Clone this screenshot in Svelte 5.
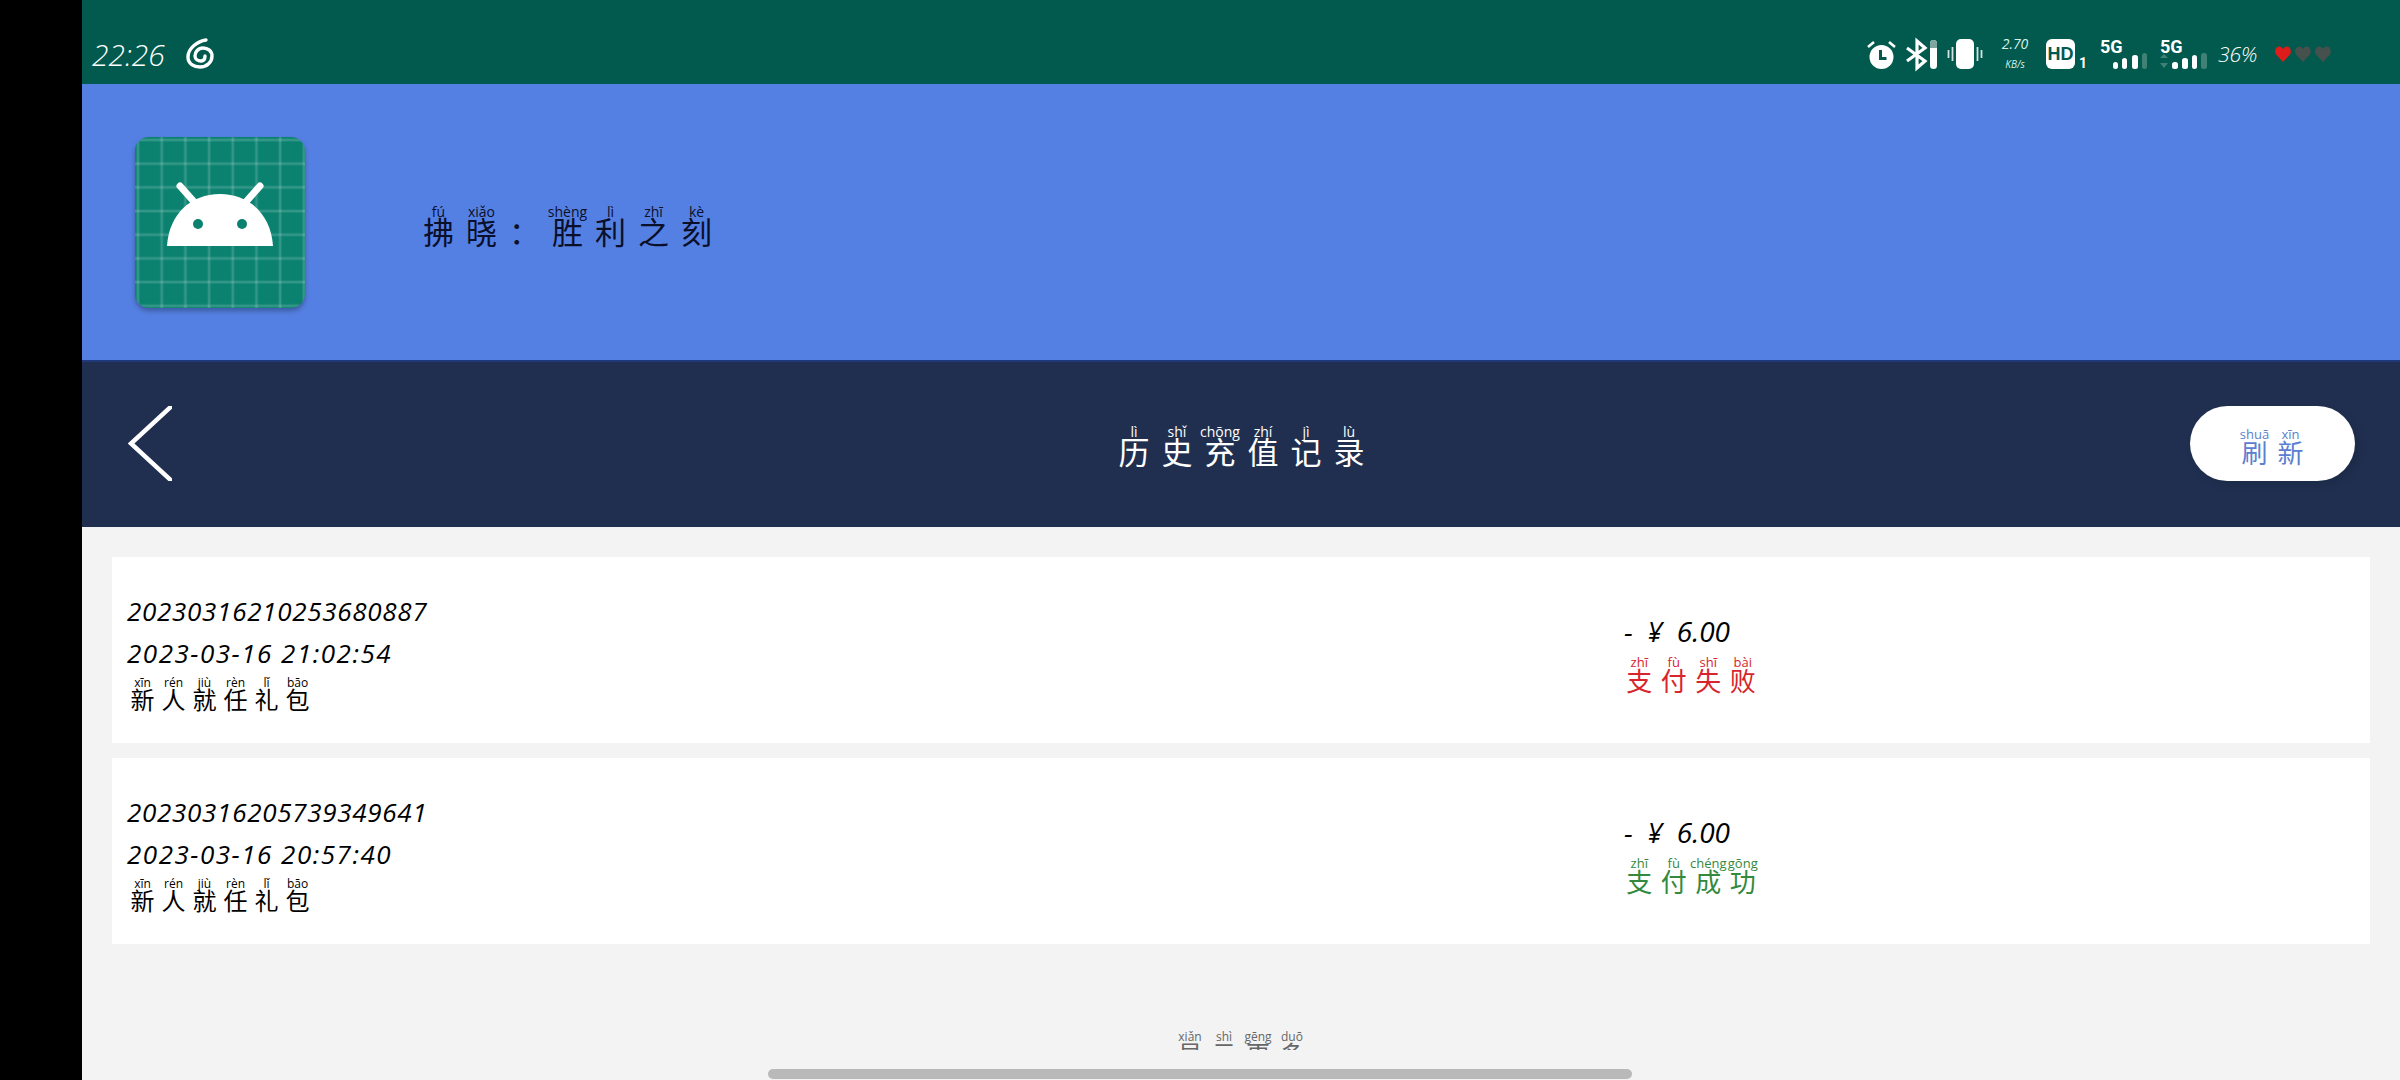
<script>
	const rows = [
		{
			id: '20230316210253680887',
			time: '2023-03-16 21:02:54',
			status: [['支', 'zhī'], ['付', 'fù'], ['失', 'shī'], ['败', 'bài']],
			tone: 'fail'
		},
		{
			id: '20230316205739349641',
			time: '2023-03-16 20:57:40',
			status: [['支', 'zhī'], ['付', 'fù'], ['成', 'chéng'], ['功', 'gōng']],
			tone: 'ok'
		}
	];

	const gift = [['新', 'xīn'], ['人', 'rén'], ['就', 'jiù'], ['任', 'rèn'], ['礼', 'lǐ'], ['包', 'bāo']];
	const appTitle = [['拂', 'fú'], ['晓', 'xiǎo'], ['：', ''], ['胜', 'shèng'], ['利', 'lì'], ['之', 'zhī'], ['刻', 'kè']];
	const pageTitle = [['历', 'lì'], ['史', 'shǐ'], ['充', 'chōng'], ['值', 'zhí'], ['记', 'jì'], ['录', 'lù']];
	const refresh = [['刷', 'shuā'], ['新', 'xīn']];
	const more = [['显', 'xiǎn'], ['示', 'shì'], ['更', 'gēng'], ['多', 'duō']];

	const heart = 'M8 16L1 8.500C-1 5.500 .5 .5 4.200 .5 5.800 .5 7.200 1.500 8 3 8.800 1.500 10.200 .5 11.800 .5 15.500 .5 17 5.500 15 8.500z';
</script>

{#snippet py(chars)}
	{#each chars as [c, p]}
		<ruby>{c}<rt>{p}</rt></ruby>
	{/each}
{/snippet}

<div class="screen">
	<div class="bezel"></div>
	<div class="main">
		<div class="status">
			<span class="clock">22:26</span>
			<svg class="swirl" width="28" height="31" viewBox="0 0 28 31">
				<path d="M20 2C12 3 2 10 2 19c0 7 6 10 12 10 7 0 12-5 12-11 0-5-4-8-9-8-5 0-8 4-8 8 0 3 3 5 6 5 3 0 4-2 4-5" fill="none" stroke="#fff" stroke-width="3.400" stroke-linecap="round" />
			</svg>
			<div class="spacer"></div>
			<div class="tray">
				<svg width="29" height="29" viewBox="0 0 29 29">
					<circle cx="14.500" cy="17" r="12" fill="#fff" />
					<path d="M13.500 10v8.500h6" fill="none" stroke="#015a4d" stroke-width="3" />
					<path d="M1 7l6-5M28 7l-6-5" stroke="#fff" stroke-width="2.600" />
				</svg>
				<svg class="bt" width="31" height="29" viewBox="0 0 31 29">
					<path d="M1 8l18 13-8 7V1l8 7L1 21" fill="none" stroke="#fff" stroke-width="3.200" />
					<rect x="24" y="0" width="7" height="29" rx="3.500" fill="#fff" />
					<path d="M24 8V3.500a3.500 3.500 0 0 1 7 0V8z" fill="#7fa59f" />
				</svg>
				<svg class="vib" width="36" height="30" viewBox="0 0 36 30">
					<rect x="9" y="0" width="18" height="30" rx="5" fill="#fff" />
					<path d="M1.500 11v8M5.500 8v14M30.500 8v14M34.500 11v8" stroke="#d3e2df" stroke-width="1.800" />
				</svg>
				<div class="speed"><span>2.70</span><span class="unit">KB/s</span></div>
				<svg class="hd" width="39" height="30" viewBox="0 0 39 30">
					<rect x="0" y="0" width="29" height="30" rx="6" fill="#fff" />
					<text x="14.500" y="21" text-anchor="middle" class="hdtext">HD</text>
					<text x="33" y="29" class="hdone">1</text>
				</svg>
				<svg class="sig" width="47" height="29" viewBox="0 0 47 29">
					<text x="0" y="13" class="fg">5G</text>
					<rect x="13" y="22" width="5" height="7" rx="2.500" fill="#fff" />
					<rect x="22" y="18" width="5" height="11" rx="2.500" fill="#fff" />
					<rect x="32" y="15" width="6" height="14" rx="2.500" fill="#fff" />
					<rect x="42" y="13" width="5" height="16" rx="2.500" fill="#3f8175" />
				</svg>
				<svg class="sig two" width="47" height="29" viewBox="0 0 47 29">
					<text x="0" y="13" class="fg">5G</text>
					<path d="M0 18l4-4 4 4zM0 23l4 5 4-5z" fill="#3f8175" />
					<rect x="12" y="22" width="6" height="7" rx="2.500" fill="#fff" />
					<rect x="22" y="18" width="6" height="11" rx="2.500" fill="#fff" />
					<rect x="32" y="15" width="5" height="14" rx="2.500" fill="#fff" />
					<rect x="41" y="13" width="6" height="16" rx="2.500" fill="#3f8175" />
				</svg>
				<span class="batt">36%</span>
				<div class="hearts">
					<svg width="16" height="16" viewBox="0 0 16 16"><path d={heart} fill="#dd1c1c" /></svg>
					<svg width="16" height="16" viewBox="0 0 16 16"><path d={heart} fill="#46504d" /></svg>
					<svg width="16" height="16" viewBox="0 0 16 16"><path d={heart} fill="#46504d" /></svg>
				</div>
			</div>
		</div>

		<div class="hero">
			<div class="logo">
				<svg width="106" height="64" viewBox="0 0 106 64">
					<path d="M0 64C2 32 24 12 53 12s51 20 53 52z" fill="#fff" />
					<path d="M13 4l16 18M93 4L77 22" stroke="#fff" stroke-width="7" stroke-linecap="round" />
					<circle cx="31" cy="42" r="5" fill="#0b8270" />
					<circle cx="75" cy="42" r="5" fill="#0b8270" />
				</svg>
			</div>
			<div class="app-title pyrow">{@render py(appTitle)}</div>
		</div>

		<div class="nav">
			<svg class="back" width="44" height="75" viewBox="0 0 44 75">
				<path d="M47 -3L3 37.500 47 78" fill="none" stroke="#fff" stroke-width="4.500" />
			</svg>
			<div class="page-title pyrow">{@render py(pageTitle)}</div>
			<button class="refresh pyrow">{@render py(refresh)}</button>
		</div>

		<div class="list">
			{#each rows as row}
				<div class="card">
					<div class="left">
						<div class="line">{row.id}</div>
						<div class="line time">{row.time}</div>
						<div class="gift pyrow">{@render py(gift)}</div>
					</div>
					<div class="right">
						<div class="amount">- ¥ 6.00</div>
						<div class="state pyrow {row.tone}">{@render py(row.status)}</div>
					</div>
				</div>
			{/each}
			<div class="more pyrow">{@render py(more)}</div>
		</div>
	</div>
	<div class="scrollbar"></div>
</div>

<style>
	:global(body) {
		background: #000;
		font-family: 'Noto Sans CJK SC', 'Noto Sans', sans-serif;
	}
	.screen {
		display: flex;
		width: 2400px;
		height: 1080px;
		overflow: hidden;
		position: relative;
	}
	.bezel {
		width: 82px;
		flex: none;
		background: #000;
	}
	.main {
		flex: 1;
		display: flex;
		flex-direction: column;
		min-width: 0;
	}
	.status {
		height: 84px;
		flex: none;
		background: #015a4d;
		display: flex;
		align-items: flex-end;
		padding: 0 69px 15px 10px;
		color: #fff;
		box-sizing: border-box;
	}
	.clock {
		font-family: 'Open Sans', sans-serif;
		font-style: italic;
		font-weight: 300;
		font-size: 30px;
		line-height: 32px;
		width: 94px;
		margin-bottom: -2px;
	}
	.swirl {
		display: block;
	}
	.spacer {
		flex: 1;
	}
	.tray {
		display: flex;
		align-items: flex-end;
	}
	.tray svg {
		display: block;
		overflow: visible;
	}
	.bt {
		margin-left: 10px;
	}
	.vib {
		margin-left: 10px;
	}
	.speed {
		display: flex;
		flex-direction: column;
		align-items: center;
		font-family: 'Open Sans', sans-serif;
		font-style: italic;
		font-size: 14px;
		line-height: 13px;
		width: 28px;
		height: 32px;
		margin-left: 18px;
		gap: 9px;
		color: #d5f0e8;
		white-space: nowrap;
	}
	.unit {
		font-size: 10px;
		line-height: 11px;
	}
	.hd {
		margin-left: 17px;
	}
	.hdtext {
		font-family: 'Liberation Sans', sans-serif;
		font-weight: 700;
		font-size: 18px;
		fill: #015a4d;
	}
	.hdone {
		font-family: 'Roboto', sans-serif;
		font-weight: 700;
		font-size: 14px;
		fill: #fff;
	}
	.sig {
		margin-left: 15px;
	}
	.sig.two {
		margin-left: 13px;
	}
	.fg {
		font-family: 'Roboto', sans-serif;
		font-weight: 700;
		font-size: 18px;
		fill: #fff;
	}
	.batt {
		font-family: 'Open Sans', sans-serif;
		font-style: italic;
		font-weight: 300;
		font-size: 21px;
		line-height: 24px;
		width: 39px;
		margin-left: 11px;
		margin-bottom: 3px;
		white-space: nowrap;
	}
	.hearts {
		display: flex;
		gap: 4px;
		margin-left: 18px;
		padding-bottom: 7px;
	}
	.hero {
		height: 276px;
		flex: none;
		background: #5580e3;
		display: flex;
		align-items: center;
		padding-left: 53px;
		box-sizing: border-box;
	}
	.logo {
		width: 170px;
		height: 171px;
		border-radius: 14px;
		background-color: #0b8270;
		background-image:
			linear-gradient(90deg, transparent 0, rgba(255, 255, 255, 0.22) 2px, transparent 4px),
			linear-gradient(transparent 0, rgba(255, 255, 255, 0.22) 2px, transparent 4px);
		background-size: 23.700px 23.700px;
		background-position: 1px 1px;
		box-shadow: 0 3px 5px rgba(0, 0, 0, 0.3);
		display: flex;
		align-items: flex-start;
		justify-content: center;
		flex: none;
	}
	.logo svg {
		margin-top: 45px;
	}
	.pyrow {
		display: flex;
	}
	ruby {
		display: inline-flex;
		flex-direction: column-reverse;
		align-items: center;
		flex: none;
		width: var(--w);
		line-height: 1;
		white-space: nowrap;
	}
	rt {
		display: block;
		font-family: 'Open Sans', sans-serif;
		font-size: var(--rt);
		line-height: 1;
		margin-bottom: var(--rt-gap, -2px);
		min-height: 1em;
	}
	.app-title {
		margin-left: 112px;
		margin-top: 6px;
		font-size: 31px;
		color: #0a0f2a;
		--w: 43px;
		--rt: 14px;
		--rt-gap: -4px;
	}
	.nav {
		height: 167px;
		flex: none;
		background: #202f50;
		border-top: 2px solid #1e3a7c;
		display: grid;
		grid-template-columns: 1fr auto 1fr;
		align-items: center;
		padding: 0 45px 0 46px;
		box-sizing: border-box;
	}
	.back {
		display: block;
		margin-top: -2px;
	}
	.page-title {
		margin-top: 2px;
		font-size: 31px;
		color: #fff;
		--w: 43px;
		--rt: 14px;
		--rt-gap: -4px;
	}
	.refresh {
		justify-self: end;
		width: 165px;
		height: 75px;
		margin-top: -2px;
		border: none;
		border-radius: 38px;
		background: #fff;
		box-shadow: 4px 4px 8px rgba(0, 0, 0, 0.1);
		color: #5b80cf;
		font-family: inherit;
		font-size: 26px;
		padding: 6px 0 0;
		justify-content: center;
		align-items: center;
		--w: 36px;
		--rt: 13px;
	}
	.list {
		flex: 1;
		background: #f3f3f3;
		padding: 30px 30px 0;
		display: flex;
		flex-direction: column;
		gap: 15px;
		min-height: 0;
		overflow: hidden;
	}
	.card {
		height: 186px;
		flex: none;
		background: #fff;
		display: flex;
		align-items: stretch;
		padding: 0 15px;
		box-sizing: border-box;
		color: #000;
	}
	.left {
		width: 1497px;
		flex: none;
		padding-top: 33px;
	}
	.line {
		font-family: 'Open Sans', sans-serif;
		font-style: italic;
		font-size: 26px;
		line-height: 42px;
		letter-spacing: 0.700px;
	}
	.time {
		letter-spacing: 1.500px;
	}
	.gift {
		font-size: 24px;
		margin-top: 3px;
		--w: 31px;
		--rt: 12px;
	}
	.right {
		padding-top: 54px;
	}
	.amount {
		font-family: 'Open Sans', sans-serif;
		font-style: italic;
		font-size: 28px;
		line-height: 40px;
		word-spacing: 7px;
	}
	.state {
		font-size: 26px;
		margin-top: 5px;
		margin-left: -2px;
		--w: 34.500px;
		--rt: 13px;
	}
	.fail {
		color: #d8242c;
	}
	.ok {
		color: #33893d;
	}
	.more {
		margin-top: 72px;
		height: 19px;
		overflow: hidden;
		font-size: 24px;
		color: #666;
		justify-content: center;
		align-items: flex-start;
		flex: none;
		--w: 34px;
		--rt: 12px;
	}
	.scrollbar {
		position: absolute;
		left: 768px;
		top: 1069px;
		width: 864px;
		height: 10px;
		border-radius: 5px;
		background: #b9b9b9;
	}
</style>
